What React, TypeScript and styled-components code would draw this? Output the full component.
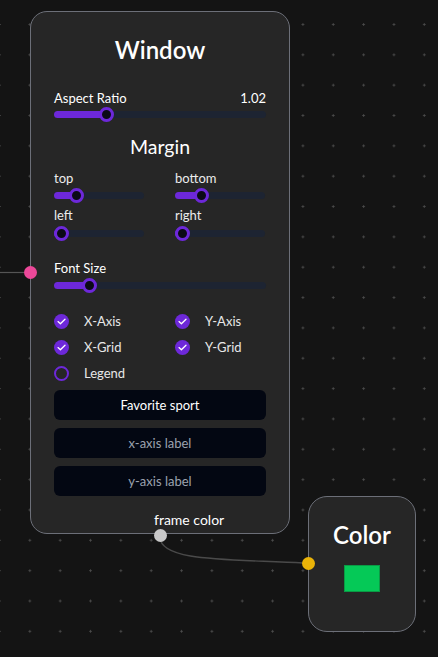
import styled, { createGlobalStyle } from 'styled-components'

const GlobalStyle = createGlobalStyle`
    html, body {
        margin: 0;
        padding: 0;
        background: #141414;
    }
    * {
        box-sizing: border-box;
    }
`

const FONT = `'Lato', 'Noto Sans', 'Open Sans', sans-serif`

type SliderProps = { value: number }
type CheckProps = { checked: boolean }

const App = () => {
    return (
        <>
            <GlobalStyle />
            <Canvas>
                <Edges width='438' height='657'>
                    <path d='M0 272.5 L24 272.5' stroke='#555' strokeWidth='1.2' fill='none' />
                    <path d='M160 537 C 160 562, 230 559, 303 563' stroke='#4a4a4a' strokeWidth='1.4' fill='none' />
                </Edges>

                <WindowNode>
                    <Title>Window</Title>
                    <LabelRow $mt={24}>
                        <span>Aspect Ratio</span>
                        <span>1.02</span>
                    </LabelRow>
                    <Slider value={0.232} $mt={1} />
                    <SubTitle>Margin</SubTitle>
                    <MarginGrid>
                        <div>
                            <SmallLabel>top</SmallLabel>
                            <Slider value={0.2} $mt={2} />
                        </div>
                        <div>
                            <SmallLabel>bottom</SmallLabel>
                            <Slider value={0.253} $mt={2} />
                        </div>
                        <div>
                            <SmallLabel $mt={5}>left</SmallLabel>
                            <Slider value={0} $mt={3} />
                        </div>
                        <div>
                            <SmallLabel $mt={5}>right</SmallLabel>
                            <Slider value={0} $mt={3} />
                        </div>
                    </MarginGrid>
                    <LabelRow $mt={20}>
                        <span>Font Size</span>
                    </LabelRow>
                    <Slider value={0.146} $mt={2} />
                    <CheckGrid>
                        <CheckItem><Check checked={true} />X-Axis</CheckItem>
                        <CheckItem><Check checked={true} />Y-Axis</CheckItem>
                        <CheckItem><Check checked={true} />X-Grid</CheckItem>
                        <CheckItem><Check checked={true} />Y-Grid</CheckItem>
                        <CheckItem><Check checked={false} />Legend</CheckItem>
                    </CheckGrid>
                    <Fields>
                        <FieldButton type='button'>Favorite sport</FieldButton>
                        <FieldInput placeholder='x-axis label' />
                        <FieldInput placeholder='y-axis label' />
                    </Fields>
                    <HandleLabel>frame color</HandleLabel>
                    <Handle $color='#ec4899' $x={-7} $y={254} />
                    <Handle $color='#c9c9c9' $x={123} $y={517} />
                </WindowNode>

                <ColorNode>
                    <Title $small>Color</Title>
                    <Swatch />
                    <Handle $color='#eab308' $x={-7} $y={60} />
                </ColorNode>
            </Canvas>
        </>
    )
}

// value is 0..1, the thumb stays inside the track
const Slider = ({ value, $mt }: SliderProps & { $mt?: number }) => {
    const pos = `calc(7px + (100% - 14px) * ${value})`
    return (
        <Track $mt={$mt}>
            <Fill style={{ width: pos }} />
            <Thumb style={{ left: pos }} />
        </Track>
    )
}

const Check = ({ checked }: CheckProps) => {
    return (
        <CheckCircle $checked={checked}>
            {checked ? (
                <svg width='9' height='7' viewBox='0 0 9 7'>
                    <path d='M1 3.6 L3.4 5.8 L8 1.2' stroke='#fff' strokeWidth='1.3' fill='none' strokeLinecap='round' strokeLinejoin='round' />
                </svg>
            ) : null}
        </CheckCircle>
    )
}

export default App


const Canvas = styled.div`
    position: relative;
    width: 438px;
    height: 657px;
    overflow: hidden;
    background-color: #141414;
    background-image: radial-gradient(circle, #4c4c4c 0.9px, transparent 1.3px);
    background-size: 30.35px 30.35px;
    background-position: -15.7px 9.3px;
    font-family: ${FONT};
    color: #fff;
`

const Edges = styled.svg`
    position: absolute;
    left: 0;
    top: 0;
`

const WindowNode = styled.div`
    position: absolute;
    left: 30px;
    top: 11px;
    width: 260px;
    height: 523px;
    padding: 22px 23px 0;
    background: #262626;
    border: 1px solid #6c6f78;
    border-radius: 17px;
    display: flex;
    flex-direction: column;
`

const ColorNode = styled.div`
    position: absolute;
    left: 308px;
    top: 496px;
    width: 108px;
    height: 136px;
    padding-top: 22px;
    background: #262626;
    border: 1px solid #6c6f78;
    border-radius: 19px;
    display: flex;
    flex-direction: column;
    align-items: center;
`

const Title = styled.div<{ $small?: boolean }>`
    font-size: 24px;
    font-weight: 600;
    line-height: 32px;
    text-align: center;
    margin-bottom: ${p => (p.$small ? '14px' : '0')};
`

const SubTitle = styled.div`
    margin-top: 14px;
    font-size: 19.5px;
    font-weight: 400;
    line-height: 24px;
    text-align: center;
`

const LabelRow = styled.div<{ $mt?: number }>`
    margin-top: ${p => p.$mt ?? 0}px;
    display: flex;
    justify-content: space-between;
    font-size: 13px;
    line-height: 16px;
    font-weight: 400;
`

const SmallLabel = styled.div<{ $mt?: number }>`
    margin-top: ${p => p.$mt ?? 0}px;
    font-size: 13px;
    line-height: 16px;
    color: #ececec;
`

const MarginGrid = styled.div`
    margin-top: 11px;
    display: grid;
    grid-template-columns: 90px 90px;
    column-gap: 31px;
`

const Track = styled.div<{ $mt?: number }>`
    position: relative;
    margin-top: ${p => p.$mt ?? 0}px;
    height: 14px;
    &::before {
        content: '';
        position: absolute;
        left: 0;
        right: 0;
        top: 3.5px;
        height: 7px;
        border-radius: 4px;
        background: #1d2432;
    }
`

const Fill = styled.div`
    position: absolute;
    left: 0;
    top: 3.5px;
    height: 7px;
    border-radius: 4px;
    background: #6d28d9;
`

const Thumb = styled.div`
    position: absolute;
    top: -0.5px;
    width: 15px;
    height: 15px;
    margin-left: -7.5px;
    border-radius: 50%;
    border: 3px solid #6d28d9;
    background: #0b0a16;
`

const CheckGrid = styled.div`
    margin-top: 21px;
    display: grid;
    grid-template-columns: 121px 90px;
    row-gap: 10px;
`

const CheckItem = styled.div`
    display: flex;
    align-items: center;
    gap: 15px;
    font-size: 13px;
    line-height: 16px;
    color: #e8e8e8;
`

const CheckCircle = styled.span<{ $checked: boolean }>`
    flex: none;
    width: 15px;
    height: 15px;
    border-radius: 50%;
    display: flex;
    align-items: center;
    justify-content: center;
    background: ${p => (p.$checked ? '#6d28d9' : 'transparent')};
    border: ${p => (p.$checked ? 'none' : '2px solid #6d28d9')};
`

const Fields = styled.div`
    margin-top: 9px;
    display: flex;
    flex-direction: column;
    gap: 8px;
`

const FieldButton = styled.button`
    height: 30px;
    border: none;
    border-radius: 6px;
    background: #030712;
    color: #fff;
    font-family: ${FONT};
    font-size: 13px;
    font-weight: 400;
`

const FieldInput = styled.input`
    height: 30px;
    border: none;
    border-radius: 6px;
    background: #030712;
    color: #fff;
    text-align: center;
    font-family: ${FONT};
    font-size: 13px;
    outline: none;
    &::placeholder {
        color: #9ca3af;
    }
`

const HandleLabel = styled.div`
    position: absolute;
    left: 123px;
    top: 499px;
    font-size: 14px;
    line-height: 18px;
`

const Handle = styled.div<{ $color: string; $x: number; $y: number }>`
    position: absolute;
    left: ${p => p.$x}px;
    top: ${p => p.$y}px;
    width: 13px;
    height: 13px;
    border-radius: 50%;
    background: ${p => p.$color};
`

const Swatch = styled.div`
    width: 36px;
    height: 27px;
    background: #05c957;
    border: 1px solid #0a9a45;
`
